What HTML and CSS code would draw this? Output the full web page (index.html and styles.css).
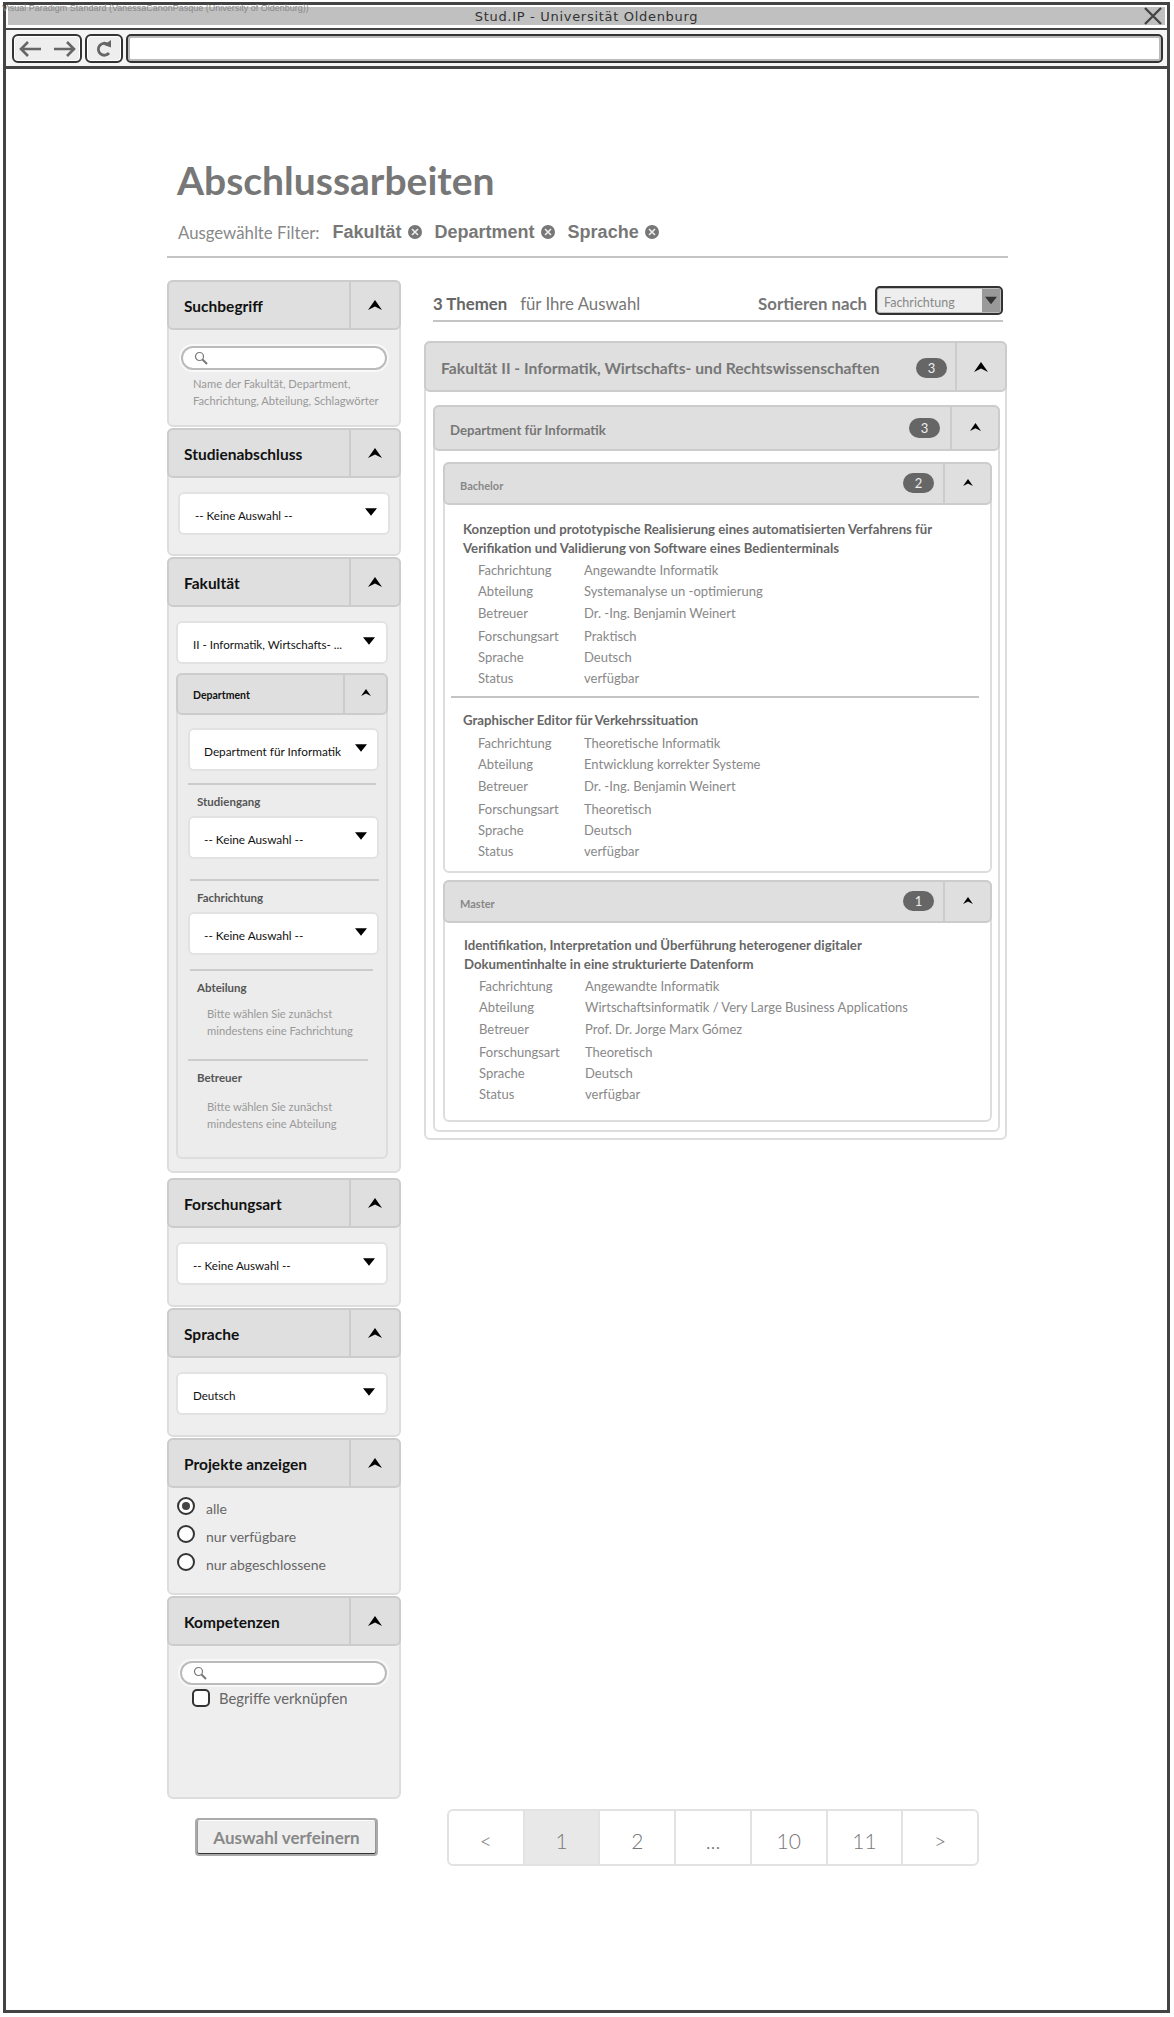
FILE: index.html
```html
<!DOCTYPE html>
<html>
<head>
    <meta http-equiv="Content-Type" content="text/html; charset=utf-8" />
    <title>Stud.IP - Universität Oldenburg</title>
    <link rel="stylesheet" href="styles.css">
</head>
<body>
<svg class="defs" width="0" height="0">
    <symbol id="up" viewBox="0 0 14 10"><path d="M0 10 L7 0 L14 10 L7 6.5 Z"/></symbol>
    <symbol id="down" viewBox="0 0 14 9"><path d="M0 0 H14 L7 9 Z"/></symbol>
    <symbol id="remove" viewBox="0 0 14 14"><circle cx="7" cy="7" r="7" fill="#777"/><path d="M4 4 L10 10 M10 4 L4 10" stroke="#eee" stroke-width="1.6"/></symbol>
    <symbol id="lens" viewBox="0 0 14 14"><circle cx="5.5" cy="5.5" r="4" fill="none" stroke="#777" stroke-width="1.2"/><path d="M8.5 8.5 L13 13" stroke="#777" stroke-width="2"/></symbol>
</svg>

<div class="stamp">Visual Paradigm Standard (VanessaCanonPasque (University of Oldenburg))</div>

<div class="frame">
    <div class="titlebar">
        <span>Stud.IP - Universität Oldenburg</span>
        <svg class="close" viewBox="0 0 18 18"><path d="M1 1 L17 17 M17 1 L1 17" stroke="#444" stroke-width="2.4" fill="none"/></svg>
    </div>
    <div class="toolbar">
        <div class="navbtn back">
            <svg width="24" height="16" viewBox="0 0 24 16"><path d="M22 8 H2 M9 1 L2 8 L9 15" fill="none" stroke="#666" stroke-width="2.6"/></svg>
            <svg width="24" height="16" viewBox="0 0 24 16"><path d="M2 8 H22 M15 1 L22 8 L15 15" fill="none" stroke="#666" stroke-width="2.6"/></svg>
        </div>
        <div class="navbtn reload">
            <svg width="18" height="18" viewBox="0 0 18 18"><path d="M13 4.5 A6 6 0 1 0 14 13" fill="none" stroke="#666" stroke-width="2.8"/><path d="M9 5 L16 7.5 L16 0 Z" fill="#666"/></svg>
        </div>
        <div class="address"></div>
    </div>

    <div class="page">
        <h1 class="headline">Abschlussarbeiten</h1>
        <div class="filters">
            <span class="filters-label">Ausgewählte Filter:</span>
            <span class="tag">Fakultät <svg><use href="#remove"/></svg></span>
            <span class="tag">Department <svg><use href="#remove"/></svg></span>
            <span class="tag">Sprache <svg><use href="#remove"/></svg></span>
        </div>

        <div class="columns">
            <div class="sidebar">
                <div class="panel">
                    <div class="head"><span class="head-title">Suchbegriff</span><span class="toggle"><svg><use href="#up"/></svg></span></div>
                    <div class="body search-body">
                        <div class="search"><svg><use href="#lens"/></svg></div>
                        <p class="hint">Name der Fakultät, Department,<br>Fachrichtung, Abteilung, Schlagwörter</p>
                    </div>
                </div>
                <div class="panel">
                    <div class="head"><span class="head-title">Studienabschluss</span><span class="toggle"><svg><use href="#up"/></svg></span></div>
                    <div class="body body-first">
                        <div class="select"><span>-- Keine Auswahl --</span><svg><use href="#down"/></svg></div>
                    </div>
                </div>
                <div class="panel">
                    <div class="head"><span class="head-title">Fakultät</span><span class="toggle"><svg><use href="#up"/></svg></span></div>
                    <div class="body faculty-body">
                        <div class="select"><span>II - Informatik, Wirtschafts- ...</span><svg><use href="#down"/></svg></div>
                        <div class="subpanel">
                            <div class="head head-small"><span class="head-title">Department</span><span class="toggle"><svg><use href="#up"/></svg></span></div>
                            <div class="subbody">
                                <div class="select select-big"><span>Department für Informatik</span><svg><use href="#down"/></svg></div>
                                <div class="sub-sep"></div>
                                <h4 class="sub-label">Studiengang</h4>
                                <div class="select select-big"><span>-- Keine Auswahl --</span><svg><use href="#down"/></svg></div>
                                <div class="sub-sep sub-sep-far"></div>
                                <h4 class="sub-label">Fachrichtung</h4>
                                <div class="select select-big"><span>-- Keine Auswahl --</span><svg><use href="#down"/></svg></div>
                                <div class="sub-sep sub-sep-near"></div>
                                <h4 class="sub-label">Abteilung</h4>
                                <p class="sub-hint">Bitte wählen Sie zunächst<br>mindestens eine Fachrichtung</p>
                                <div class="sub-sep sub-sep-wide"></div>
                                <h4 class="sub-label">Betreuer</h4>
                                <p class="sub-hint sub-hint-low">Bitte wählen Sie zunächst<br>mindestens eine Abteilung</p>
                            </div>
                        </div>
                    </div>
                </div>
                <div class="panel panel-gap">
                    <div class="head"><span class="head-title">Forschungsart</span><span class="toggle"><svg><use href="#up"/></svg></span></div>
                    <div class="body body-tight">
                        <div class="select"><span>-- Keine Auswahl --</span><svg><use href="#down"/></svg></div>
                    </div>
                </div>
                <div class="panel">
                    <div class="head"><span class="head-title">Sprache</span><span class="toggle"><svg><use href="#up"/></svg></span></div>
                    <div class="body body-tight">
                        <div class="select"><span>Deutsch</span><svg><use href="#down"/></svg></div>
                    </div>
                </div>
                <div class="panel">
                    <div class="head"><span class="head-title">Projekte anzeigen</span><span class="toggle"><svg><use href="#up"/></svg></span></div>
                    <div class="radios">
                        <div class="radio"><i class="dot on"></i><span>alle</span></div>
                        <div class="radio"><i class="dot"></i><span>nur verfügbare</span></div>
                        <div class="radio"><i class="dot"></i><span>nur abgeschlossene</span></div>
                    </div>
                </div>
                <div class="panel">
                    <div class="head"><span class="head-title">Kompetenzen</span><span class="toggle"><svg><use href="#up"/></svg></span></div>
                    <div class="skills">
                        <div class="search"><svg><use href="#lens"/></svg></div>
                        <div class="check"><i class="box"></i><span>Begriffe verknüpfen</span></div>
                    </div>
                </div>
                <div class="refine"><span>Auswahl verfeinern</span></div>
            </div>

            <div class="main">
                <div class="result-bar">
                    <div class="count"><b>3 Themen</b><span>für Ihre Auswahl</span></div>
                    <div class="sort">
                        <b>Sortieren nach</b>
                        <div class="sort-select"><span>Fachrichtung</span><i><svg><use href="#down"/></svg></i></div>
                    </div>
                </div>

                <div class="box1">
                    <div class="head head-box1"><span class="head-title">Fakultät II - Informatik, Wirtschafts- und Rechtswissenschaften</span><em class="badge">3</em><span class="toggle"><svg><use href="#up"/></svg></span></div>
                    <div class="box2">
                        <div class="head head-box2"><span class="head-title">Department für Informatik</span><em class="badge">3</em><span class="toggle"><svg><use href="#up"/></svg></span></div>
                        <div class="box3">
                            <div class="head head-box3"><span class="head-title">Bachelor</span><em class="badge">2</em><span class="toggle"><svg><use href="#up"/></svg></span></div>
                            <div class="thesis">
                                <h3>Konzeption und prototypische Realisierung eines automatisierten Verfahrens für<br>Verifikation und Validierung von Software eines Bedienterminals</h3>
                                <dl>
                                    <dt>Fachrichtung</dt><dd>Angewandte Informatik</dd>
                                    <dt>Abteilung</dt><dd>Systemanalyse un -optimierung</dd>
                                    <dt>Betreuer</dt><dd>Dr. -Ing. Benjamin Weinert</dd>
                                    <dt>Forschungsart</dt><dd>Praktisch</dd>
                                    <dt>Sprache</dt><dd>Deutsch</dd>
                                    <dt>Status</dt><dd>verfügbar</dd>
                                </dl>
                            </div>
                            <div class="thesis-sep"></div>
                            <div class="thesis thesis-next">
                                <h3>Graphischer Editor für Verkehrssituation</h3>
                                <dl>
                                    <dt>Fachrichtung</dt><dd>Theoretische Informatik</dd>
                                    <dt>Abteilung</dt><dd>Entwicklung korrekter Systeme</dd>
                                    <dt>Betreuer</dt><dd>Dr. -Ing. Benjamin Weinert</dd>
                                    <dt>Forschungsart</dt><dd>Theoretisch</dd>
                                    <dt>Sprache</dt><dd>Deutsch</dd>
                                    <dt>Status</dt><dd>verfügbar</dd>
                                </dl>
                            </div>
                        </div>
                        <div class="box3">
                            <div class="head head-box3"><span class="head-title">Master</span><em class="badge">1</em><span class="toggle"><svg><use href="#up"/></svg></span></div>
                            <div class="thesis thesis-master">
                                <h3>Identifikation, Interpretation und Überführung heterogener digitaler<br>Dokumentinhalte in eine strukturierte Datenform</h3>
                                <dl>
                                    <dt>Fachrichtung</dt><dd>Angewandte Informatik</dd>
                                    <dt>Abteilung</dt><dd>Wirtschaftsinformatik / Very Large Business Applications</dd>
                                    <dt>Betreuer</dt><dd>Prof. Dr. Jorge Marx Gómez</dd>
                                    <dt>Forschungsart</dt><dd>Theoretisch</dd>
                                    <dt>Sprache</dt><dd>Deutsch</dd>
                                    <dt>Status</dt><dd>verfügbar</dd>
                                </dl>
                            </div>
                        </div>
                    </div>
                </div>

                <div class="pager">
                    <a>&lt;</a><a class="current">1</a><a>2</a><a>...</a><a>10</a><a>11</a><a>&gt;</a>
                </div>
            </div>
        </div>
    </div>
</div>
</body>
</html>
```

FILE: styles.css
```css
*{ margin: 0; padding: 0; box-sizing: border-box;}
html, body{ background: #fff;}
body{ font-family: "Lato", "Liberation Sans", sans-serif; color: #666; position: relative; width: 1174px; height: 2017px; overflow: hidden;}
.defs{ position: absolute;}
i, em{ font-style: normal;}

.stamp{ position: absolute; top: 3px; left: 2px; font: 9px "Liberation Sans", sans-serif; color: #888; white-space: nowrap; z-index: 2;}

/* browser frame */
.frame{ margin: 2px 0 0 3px; width: 1167px; height: 2011px; border: 3px solid #444; background: #fff;}
.titlebar{ position: relative; height: 18px; margin: 2px 2px 3px; background: #c0c0c0; font: 13px/19px "DejaVu Sans", sans-serif; color: #333; text-align: center; letter-spacing: 0.7px;}
.close{ position: absolute; right: 3px; top: 0; width: 18px; height: 18px;}
.toolbar{ display: flex; gap: 3px; height: 41px; padding: 4px 4px 0 6px; background: #f5f5f5; border-top: 2px solid #444; border-bottom: 3px solid #444;}
.navbtn{ display: flex; align-items: center; justify-content: center; height: 29px; background: #eee; border: 2px solid #333; border-radius: 6px; box-shadow: inset 0 0 0 1px #fff;}
.back{ width: 70px; gap: 9px;}
.reload{ width: 38px;}
.address{ flex: 1; height: 29px; background: #fff; border: 2px solid #333; border-radius: 5px; box-shadow: inset 0 0 0 2px #bbb;}

/* page head */
.page{ width: 841px; margin-left: 161px;}
.headline{ margin-top: 87px; font-size: 39px; line-height: 48px; font-weight: 700; color: #777; padding-left: 10px;}
.filters{ display: flex; align-items: center; height: 41px; margin-top: 13px; padding: 0 0 9px 11px; border-bottom: 2px solid #c4c4c4;}
.filters-label{ font-size: 16.8px; color: #888; margin-right: 13px;}
.tag{ display: flex; align-items: center; gap: 6px; margin-right: 13px; font: bold 18px "Liberation Sans", sans-serif; color: #777;}
.tag svg{ width: 14px; height: 14px;}
.columns{ display: flex; gap: 23px; margin-top: 22px;}

/* shared header with toggle */
.head{ display: flex; align-items: center; height: 50px; background: #dfdfdf; border: 2px solid #ccc; border-radius: 6px;}
.head-title{ flex: 1; padding: 2px 0 0 15px; font-size: 15.5px; font-weight: 700; color: #111;}
.toggle{ display: flex; align-items: center; justify-content: center; align-self: stretch; width: 50px; border-left: 2px solid #ccc;}
.toggle svg{ width: 14px; height: 10px;}

/* sidebar */
.sidebar{ width: 234px; flex: none;}
.panel{ margin-bottom: 1px; background: #eee; border: 2px solid #ddd; border-radius: 6px;}
.panel > .head{ margin: -2px;}
.panel-gap{ margin-top: 5px;}
.body{ padding: 16px 9px 20px;}
.body-first{ padding-bottom: 19px;}
.body-tight{ padding: 16px 11px 20px 7px;}
.search-body{ padding: 18px 12px 0; height: 97px;}
.search{ display: flex; align-items: center; height: 24px; padding-left: 11px; background: #fff; border: 2px solid #bbb; border-radius: 12px; box-shadow: 0 0 0 2px #f8f8f8;}
.search svg{ width: 14px; height: 14px;}
.hint{ margin: 6px 0 0 12px; font-size: 11.2px; line-height: 16.5px; color: #999; white-space: nowrap;}
.select{ display: flex; align-items: center; justify-content: space-between; height: 43px; padding: 4px 11px 0 15px; background: #fff; border: 2px solid #e2e2e2; border-radius: 6px; font-size: 11.6px; color: #111;}
.select span{ white-space: nowrap;}
.select svg{ width: 12px; height: 8px; margin-top: -7px; flex: none;}
.select-big{ font-size: 11.8px; padding: 4px 10px 0 14px;}
.faculty-body{ padding: 16px 11px 12px 7px;}
.subpanel{ margin-top: 9px; background: #ececec; border: 2px solid #ddd; border-radius: 6px;}
.subpanel > .head{ margin: -2px;}
.head-small{ height: 42px;}
.head-small .head-title{ font-size: 10.5px; padding-left: 15px;}
.head-small .toggle{ width: 43px;}
.head-small .toggle svg{ width: 10px; height: 7px; margin-top: -3px;}
.subbody{ padding: 15px 7px 25px 10px;}
.sub-sep{ height: 2px; margin-top: 12px; margin-right: 3px; background: #ccc;}
.sub-sep-far{ margin: 20px 0 0 2px;}
.sub-sep-near{ margin: 14px 6px 0 2px;}
.sub-sep-wide{ margin-top: 20px; width: 180px;}
.sub-label{ margin: 9px 0 7px 9px; font-size: 11.5px; line-height: 15px; font-weight: 700; color: #555;}
.sub-hint{ margin: 11px 0 0 19px; font-size: 11.2px; line-height: 16.5px; color: #999; white-space: nowrap;}
.sub-hint-low{ margin-top: 14px;}

.radios{ padding: 9px 0 14px 8px;}
.radio{ display: flex; height: 28px; gap: 11px; font-size: 14px; color: #666;}
.radio span{ padding-top: 5px;}
.dot{ position: relative; display: block; width: 18px; height: 18px; margin-top: 2px; background: #fff; border: 2px solid #333; border-radius: 50%;}
.dot.on::after{ content: ""; position: absolute; left: 3px; top: 3px; width: 8px; height: 8px; background: #444; border-radius: 50%;}
.skills{ height: 153px; padding: 17px 12px 0 11px;}
.check{ display: flex; align-items: center; gap: 9px; height: 20px; margin: 3px 0 0 12px; font-size: 14.8px; color: #666;}
.box{ display: block; width: 18px; height: 18px; background: #fff; border: 2px solid #333; border-radius: 5px;}
.refine{ display: flex; align-items: center; justify-content: center; width: 183px; height: 38px; margin: 19px 0 0 28px; background: #eee; border: 2px solid #aaa; border-radius: 4px; box-shadow: inset 0 -1px 0 #333, inset 1px 0 0 #999, inset -1px 0 0 #999, inset 0 1px 0 #fff; font-size: 17px; font-weight: 700; color: #888;}

/* results */
.main{ width: 583px;}
.result-bar{ display: flex; justify-content: space-between; align-items: center; height: 36px; margin: 6px 4px 0 9px; padding-bottom: 0; border-bottom: 2px solid #c4c4c4;}
.count{ font-size: 16.8px; color: #777;}
.count b{ margin-right: 13px; color: #666;}
.sort{ display: flex; align-items: center; gap: 8px; font-size: 16.8px; color: #777;}
.sort-select{ display: flex; justify-content: space-between; width: 128px; height: 29px; margin-top: -5px; background: #eee; border: 2px solid #333; border-radius: 5px; box-shadow: inset 0 0 0 1px #bbb; font-size: 12.5px; color: #888;}
.sort-select span{ padding: 7px 0 0 7px;}
.sort-select i{ display: flex; align-items: center; justify-content: center; width: 18px; margin: 1px; background: #999;}
.sort-select svg{ width: 12px; height: 9px; fill: #333;}

.box1{ margin-top: 19px; padding: 0 5px 5px 7px; height: 799px; border: 2px solid #ddd; border-radius: 6px; background: #fff;}
.head-box1{ height: 51px; margin: -2px -7px 0 -9px;}
.head-box1 .head-title{ padding: 3px 0 0 15px; font-size: 15.7px; color: #777;}
.badge{ display: block; background: #666; color: #eee; text-align: center; border-radius: 10px; font-size: 13px; line-height: 20px; width: 31px; height: 20px; margin-right: 8px; margin-top: 2px;}
.box2{ margin-top: 13px; padding: 0 6px 0 8px; height: 727px; border: 2px solid #ddd; border-radius: 6px;}
.head-box2{ height: 46px; margin: -2px -8px 0 -10px;}
.head-box2 .head-title{ padding: 4px 0 0 15px; font-size: 13.2px; color: #777;}
.head-box2 .toggle{ width: 48px;}
.head-box2 .toggle svg{ width: 11px; height: 8px; margin-top: -3px;}
.head-box2 .badge{ margin-right: 10px; margin-top: -1px;}
.box3{ margin-top: 11px; border: 2px solid #ddd; border-radius: 6px;}
.box3 + .box3{ margin-top: 7px;}
.head-box3{ height: 43px; margin: -2px -2px 0;}
.head-box3 .head-title{ padding: 4px 0 0 15px; font-size: 11px; color: #888;}
.head-box3 .toggle{ width: 47px;}
.head-box3 .toggle svg{ width: 10px; height: 7px; margin-top: -2px;}
.head-box3 .badge{ margin-right: 9px; margin-top: -2px;}

.thesis{ padding: 15px 0 0 18px;}
.thesis h3{ font-size: 13.2px; line-height: 19px; font-weight: 700; color: #666; white-space: nowrap;}
.thesis dl{ display: grid; grid-template-columns: 106px 1fr; grid-template-rows: 21px 22px 23px 21px 21px 21px; margin: 2px 0 0 15px; font-size: 13px; line-height: 21px; color: #888;}
.thesis-sep{ height: 2px; margin: 7px 11px 0 6px; background: #c4c4c4;}
.thesis-next{ padding: 13px 0 9px 18px;}
.thesis-next dl{ margin-top: 3px;}
.thesis-master{ padding: 13px 0 15px 19px;}

.pager{ display: flex; width: 532px; height: 57px; margin: 669px 0 0 23px; border: 2px solid #e2e2e2; border-radius: 6px;}
.pager a{ flex: 1; display: flex; align-items: center; justify-content: center; padding-top: 6px; font-size: 21px; font-weight: 300; color: #777; border-left: 2px solid #e2e2e2;}
.pager a:first-child{ border-left: 0;}
.pager .current{ background: #e8e8e8;}
```
